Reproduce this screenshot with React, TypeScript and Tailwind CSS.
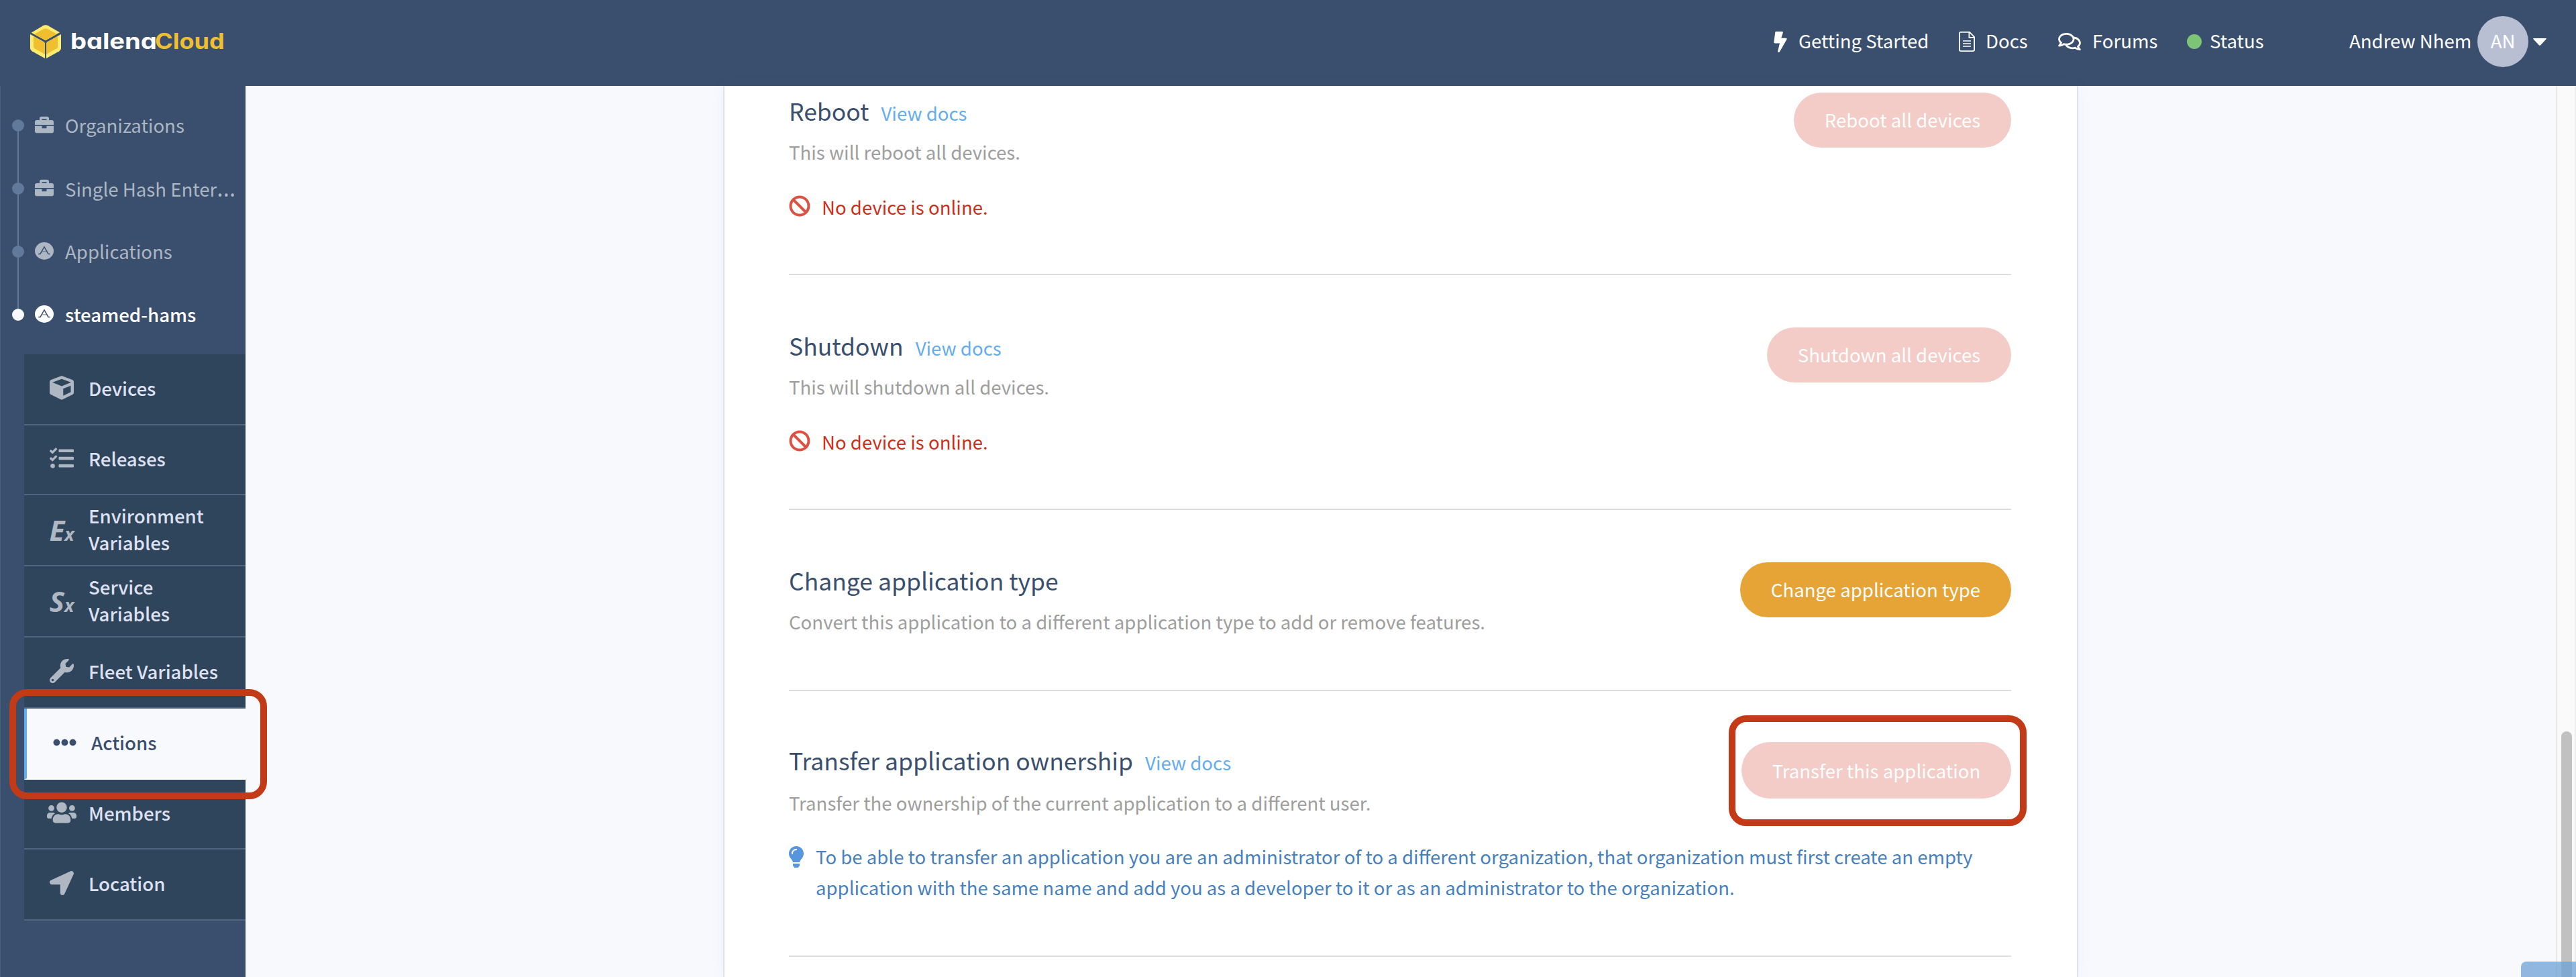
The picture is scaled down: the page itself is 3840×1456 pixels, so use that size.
import React from "react";
import {
  FaBan,
  FaBolt,
  FaBriefcase,
  FaCube,
  FaEllipsisH,
  FaLightbulb,
  FaLocationArrow,
  FaRegComments,
  FaTasks,
  FaUsers,
  FaWrench,
} from "react-icons/fa";

function LogoMark() {
  return (
    <svg viewBox="0 0 138 150" className="h-[50px] w-[46px] shrink-0">
      <path d="M5 35 L58 4 Q69 -2 80 4 L132 34 L69 70 Z" fill="#fdec6e" />
      <path d="M18 42 L60 19 Q69 14 78 19 L120 41 L69 70 Z" fill="#efbf2f" />
      <path d="M0 42 L60 76 Q66 80 66 86 L66 150 L8 118 Q0 113 0 105 Z" fill="#fdec6e" />
      <path d="M15 51 L60 76 Q66 80 66 86 L66 132 L20 106 Q15 103 15 98 Z" fill="#efbf2f" />
      <path d="M138 42 L78 76 Q72 80 72 86 L72 150 L130 118 Q138 113 138 105 Z" fill="#fdec6e" />
      <path d="M123 51 L78 76 Q72 80 72 86 L72 132 L118 106 Q123 103 123 98 Z" fill="#efbf2f" />
    </svg>
  );
}

function AppIcon() {
  return (
    <svg viewBox="0 0 28 26" className="h-[26px] w-7">
      <ellipse cx="14" cy="13" rx="14" ry="12.9" fill="currentColor" />
      <path d="M9.8 13.9 H18.2" stroke="#3a4f6d" strokeWidth="1.3" opacity="0.6" />
      <path
        d="M5.3 17.4 H8 L14 7 L20 17.4 H22.7"
        fill="none"
        stroke="#3a4f6d"
        strokeWidth="1.5"
      />
    </svg>
  );
}

function DocsIcon() {
  return (
    <svg viewBox="0 0 24 30" className="h-[30px] w-6" fill="none" stroke="white" strokeWidth="1.8">
      <path d="M3 .9 H16 L23.1 8 V27 Q23.1 29.1 21 29.1 H3 Q.9 29.1 .9 27 V3 Q.9 .9 3 .9 Z" />
      <path d="M15.4 1 V8.8 H23" />
      <path d="M6 14 H18 M6 18 H18 M6 22 H18" strokeWidth="1.6" />
    </svg>
  );
}

function NavItem({ icon, label, box }: { icon: React.ReactNode; label: string; box: string }) {
  return (
    <a className={`flex shrink-0 items-center ${box}`}>
      {icon}
      <span className="pb-1 leading-10">{label}</span>
    </a>
  );
}

function Header() {
  return (
    <header className="flex h-32 shrink-0 items-center bg-[#3a4f6d] pb-1 pl-[45px] text-white">
      <LogoMark />
      <div className="ml-[14px] flex w-[240px] pb-px font-['Inter'] text-[32px] leading-10 font-bold [font-feature-settings:'cv11']">
        <span className="w-[126px] origin-left scale-x-[1.19]">balena</span>
        <span className="origin-left scale-x-[1.125] text-[#efbf2f]">Cloud</span>
      </div>
      <nav className="ml-auto flex w-[1196px] shrink-0 items-center">
        <NavItem
          box="w-[276px]"
          label="Getting Started"
          icon={
            <span className="w-[37px]">
              <FaBolt className="h-[31px] w-5" />
            </span>
          }
        />
        <NavItem
          box="w-[148px]"
          label="Docs"
          icon={
            <span className="w-10 pb-px">
              <DocsIcon />
            </span>
          }
        />
        <NavItem
          box="w-[192px]"
          label="Forums"
          icon={
            <span className="w-[51px] pb-px">
              <FaRegComments className="h-[30px] w-[34px]" />
            </span>
          }
        />
        <NavItem
          box="w-[242px]"
          label="Status"
          icon={
            <span className="w-[34px] pb-px">
              <span className="block size-[22px] rounded-full bg-[#7cc576]" />
            </span>
          }
        />
        <span className="w-[191px] pb-1 leading-10 whitespace-nowrap">Andrew Nhem</span>
        <span className="flex size-[76px] items-center justify-center rounded-full bg-[#b8bfd3] pb-1 leading-10">
          AN
        </span>
        <svg viewBox="0 0 20 11" className="ml-[7px] h-[11px] w-5">
          <path d="M1 0 H19 Q20.4 .3 19.4 1.6 L11 10.4 Q10 11.2 9 10.4 L.6 1.6 Q-.4 .3 1 0 Z" fill="white" />
        </svg>
      </nav>
    </header>
  );
}

function Crumb({
  icon,
  active,
  children,
}: {
  icon: React.ReactNode;
  active?: boolean;
  children: React.ReactNode;
}) {
  return (
    <a
      className={
        active
          ? "flex h-[94px] items-center pl-[18px] font-medium text-white"
          : "flex h-[94px] items-center pl-[18px] text-[#adb6c3]"
      }
    >
      <span
        className={
          active
            ? "relative mt-[2px] size-[18px] rounded-full bg-[#f8f9fd]"
            : "relative mt-[2px] size-[18px] rounded-full bg-[#61799b]"
        }
      />
      <span className="ml-4 w-[45px]">{icon}</span>
      <span className="h-10 leading-10 whitespace-nowrap">{children}</span>
    </a>
  );
}

function VarIcon({ letter }: { letter: string }) {
  return (
    <span className="flex items-baseline pt-[10px] font-['Noto_Sans'] leading-[50px] font-bold italic">
      <span className="text-[42px]">{letter}</span>
      <span className="text-[27px]">x</span>
    </span>
  );
}

function MenuItem({
  icon,
  label,
  height = "h-[106px]",
}: {
  icon: React.ReactNode;
  label: React.ReactNode;
  height?: string;
}) {
  return (
    <a
      className={`flex items-center border-b-2 border-[#4f6580] bg-[#2f455c] pb-[5px] pl-7 text-[#dfe1f2] ${height}`}
    >
      <span className="flex w-14 justify-center text-[#afb7c3]">{icon}</span>
      <span className="ml-3 leading-10 font-medium">{label}</span>
    </a>
  );
}

function Sidebar() {
  return (
    <aside className="relative w-[366px] shrink-0 bg-[#3a4f6d] pt-[11px]">
      <div className="absolute top-[58px] left-[26px] h-[283px] w-[2px] bg-[#61799b]" />
      <Crumb icon={<FaBriefcase className="size-7" />}>Organizations</Crumb>
      <Crumb icon={<FaBriefcase className="size-7" />}>
        Single Hash Enter<span className="font-['Open_Sans'] text-[36px]">…</span>
      </Crumb>
      <Crumb icon={<AppIcon />}>Applications</Crumb>
      <Crumb icon={<AppIcon />} active>
        steamed-hams
      </Crumb>
      <nav className="mt-[13px] ml-9 flex flex-col">
        <MenuItem icon={<FaCube className="size-9" />} label="Devices" />
        <MenuItem height="h-[104px]" icon={<FaTasks className="size-9" />} label="Releases" />
        <MenuItem
          icon={<VarIcon letter="E" />}
          label={
            <>
              Environment
              <br />
              Variables
            </>
          }
        />
        <MenuItem
          icon={<VarIcon letter="S" />}
          label={
            <>
              Service
              <br />
              Variables
            </>
          }
        />
        <MenuItem icon={<FaWrench className="size-9" />} label="Fleet Variables" />
        <a className="flex h-[106px] items-center border-b-2 border-l-4 border-b-white border-l-[#64aeee] bg-[#f8f9fd] pb-1 pl-7 text-[#3a4f6d]">
          <span className="flex w-14 justify-center">
            <FaEllipsisH className="size-[35px]" />
          </span>
          <span className="ml-3 leading-10 font-medium">Actions</span>
        </a>
        <MenuItem height="h-[104px]" icon={<FaUsers className="h-9 w-11" />} label="Members" />
        <MenuItem icon={<FaLocationArrow className="size-9" />} label="Location" />
      </nav>
      <div className="absolute top-[899px] left-[14px] h-[164px] w-[384px] rounded-[26px] border-10 border-[#c33a17]" />
      <div className="absolute top-0 left-0 h-full w-px bg-[#48607b]" />
    </aside>
  );
}

function Section({
  title,
  docs,
  desc,
  box,
  descGap = "mt-3 mb-9",
  button,
  children,
}: {
  title: string;
  docs?: boolean;
  desc: string;
  box: string;
  descGap?: string;
  button: React.ReactNode;
  children?: React.ReactNode;
}) {
  return (
    <section className={`flex items-start justify-between border-b-2 border-[#dcdcdc] ${box}`}>
      <div>
        <div className="flex h-[53px] items-baseline leading-[53px]">
          <h2 className="text-[35.5px] text-[#3a4f6d]">{title}</h2>
          {docs && <a className="ml-[18px] text-[#64adee]">View docs</a>}
        </div>
        <p className={`leading-[46px] text-[#9e9e9e] ${descGap}`}>{desc}</p>
        {children}
      </div>
      <div className="relative shrink-0">{button}</div>
    </section>
  );
}

function Offline() {
  return (
    <div className="flex h-[46px] items-center text-[#c9301c]">
      <span className="w-[49px] pb-[2px]">
        <FaBan className="size-8 text-[#dd5143]" />
      </span>
      <span className="leading-[46px]">No device is online.</span>
    </div>
  );
}

const dangerButton =
  "flex items-center justify-center rounded-full bg-[#f3cbc7] text-white leading-10";

export default function App() {
  return (
    <div className="relative flex h-[1456px] w-[3840px] flex-col overflow-hidden bg-[#f8f9fd] font-['Noto_Sans_CJK_SC',sans-serif] text-[27.6px]">
      <Header />
      <div className="flex min-h-0 flex-1">
        <Sidebar />
        <main className="flex flex-1">
          <div className="ml-[712px] w-[2020px] border-x-2 border-[#dde1f1] bg-white pr-[98px] pl-24 shadow-[0_0_20px_rgba(100,120,200,0.06)]">
            <Section
              title="Reboot"
              docs
              desc="This will reboot all devices."
              box="h-[282px] pt-[10px]"
              button={<button className={`${dangerButton} h-[82px] w-[324px] pb-[2px]`}>Reboot all devices</button>}
            >
              <Offline />
            </Section>
            <Section
              title="Shutdown"
              docs
              desc="This will shutdown all devices."
              box="h-[350px] pt-[78px]"
              button={<button className={`${dangerButton} h-[82px] w-[364px] pb-[2px]`}>Shutdown all devices</button>}
            >
              <Offline />
            </Section>
            <Section
              title="Change application type"
              desc="Convert this application to a different application type to add or remove features."
              box="h-[270px] pt-[78px]"
              button={
                <button className="flex h-[82px] w-[404px] items-center justify-center rounded-full bg-[#e5a435] pb-[2px] leading-10 text-white">
                  Change application type
                </button>
              }
            />
            <Section
              title="Transfer application ownership"
              docs
              desc="Transfer the ownership of the current application to a different user."
              box="h-[396px] pt-[76px]"
              descGap="mt-[14px] mb-[34px]"
              button={
                <>
                  <button className={`${dangerButton} h-[84px] w-[402px]`}>Transfer this application</button>
                  <div className="absolute -top-10 -left-[19px] h-[165px] w-[444px] rounded-[26px] border-10 border-[#c33a17]" />
                </>
              }
            >
              <div className="-mr-[360px] flex items-start text-[27.55px] text-[#4680bf]">
                <span className="w-10 shrink-0 pt-2">
                  <FaLightbulb className="h-8 w-[22px] text-[#5796de]" />
                </span>
                <p className="leading-[46px] whitespace-nowrap">
                  To be able to transfer an application you are an administrator of to a different organization, that
                  organization must first create an empty
                  <br />
                  application with the same name and add you as a developer to it or as an administrator to the
                  organization.
                </p>
              </div>
            </Section>
          </div>
        </main>
        <div className="flex w-[30px] shrink-0 items-end border-x-2 border-l-[#e8e8e8] border-r-[#eeeeee] bg-[#fafafa] pl-[6px]">
          <div className="h-[366px] w-4 rounded-t-full bg-[#c1c1c1]" />
        </div>
      </div>
      <div className="absolute right-0 bottom-0 h-[23px] w-[82px] rounded-tl-[8px] bg-[#6ca0d4]/75" />
    </div>
  );
}
